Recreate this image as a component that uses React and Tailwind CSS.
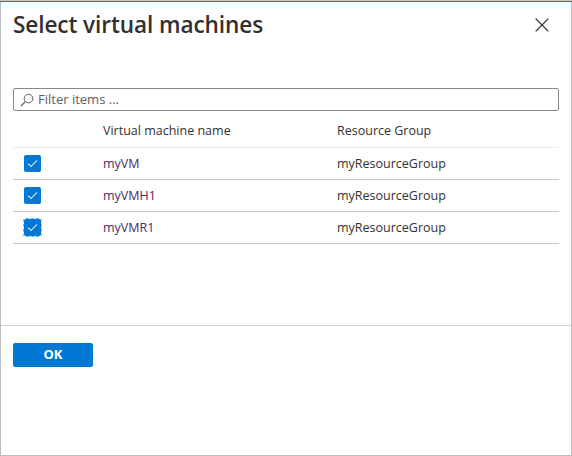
import { X } from 'lucide-react';

const rows = [
  { name: 'myVM', group: 'myResourceGroup' },
  { name: 'myVMH1', group: 'myResourceGroup' },
  { name: 'myVMR1', group: 'myResourceGroup', focused: true },
];

function Checkbox({ focused }) {
  return (
    <div
      className={
        'w-[17px] h-[17px] rounded-[2px] bg-[#0078d4] flex items-center justify-center ' +
        (focused ? 'outline outline-1 outline-dashed outline-[#4fc3f7]' : '')
      }
    >
      <svg width="11" height="9" viewBox="0 0 11 9" fill="none">
        <path d="M1 4.6 L4 7.4 L10 1.4" stroke="#cfe6fb" strokeWidth="1.1" />
      </svg>
    </div>
  );
}

export default function App() {
  return (
    <div
      className="w-[572px] h-[456px] bg-white border border-[#bdbdbd] border-t-0 flex flex-col text-[#323130]"
      style={{ fontFamily: '"Open Sans", "Noto Sans", sans-serif' }}
    >
      <div className="h-[2px] bg-[#0078d4] border-t border-[#c8c8c8] -mx-px" />
      <div className="flex items-start justify-between pl-3 pr-[17px] pt-[8px]">
        <h1 className="text-[22.6px] leading-[30px] font-semibold tracking-[-0.1px]">Select virtual machines</h1>
        <X className="w-[24px] h-[24px] mt-[3px] text-[#323130]" strokeWidth={1.1} />
      </div>

      <div className="px-3 mt-[48px]">
        <div className="h-[23px] border border-[#8a8886] rounded-[2px] flex items-center pl-[6px] gap-[4px]">
          <svg width="14" height="14" viewBox="0 0 14 14" fill="none">
            <circle cx="8.5" cy="5.5" r="4.3" stroke="#605e5c" strokeWidth="1" />
            <path d="M5.5 8.5 L1 13" stroke="#605e5c" strokeWidth="1.1" />
          </svg>
          <span className="text-[13px] text-[#605e5c]">Filter items ...</span>
        </div>

        <div className="mt-[3px]">
          <div className="flex items-center h-[34px] pt-[2px] border-b border-[#edebe9] text-[12.5px] font-medium">
            <div className="w-[90px]" />
            <div className="w-[234px]">Virtual machine name</div>
            <div>Resource Group</div>
          </div>
          {rows.map((r) => (
            <div key={r.name} className="flex items-center h-[32px] pt-[2px] border-b border-[#c8c6c4] text-[12.5px]">
              <div className="w-[90px] pl-[11px] -mt-[2px]">
                <Checkbox focused={r.focused} />
              </div>
              <div className="w-[234px] text-[#4a2a5c]">{r.name}</div>
              <div>{r.group}</div>
            </div>
          ))}
        </div>
      </div>

      <div className="mt-[81px] border-t border-[#d2d0ce]" />
      <div className="px-3 pt-[15px]">
        <button className="w-[80px] h-[24px] bg-[#0078d4] rounded-[2px] text-white text-[13px] font-bold">
          OK
        </button>
      </div>
    </div>
  );
}
